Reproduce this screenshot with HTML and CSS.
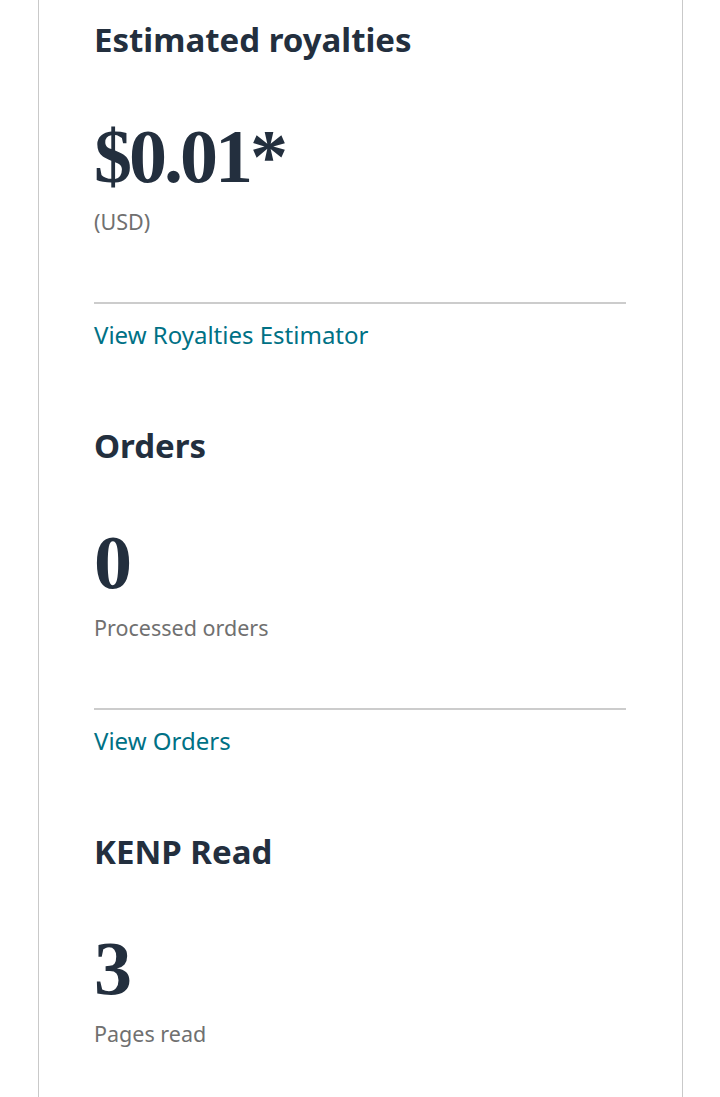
FILE: index.html
```html
<!DOCTYPE html>
<html lang="en">
<head>
  <meta charset="UTF-8">
  <meta name="viewport" content="width=device-width, initial-scale=1.0">
  <title>Sales dashboard</title>
  <link rel="stylesheet" href="styles.css">
</head>
<body>
  <div class="card">
    <div class="metric">
      <h2 class="metric-title">Estimated royalties</h2>
      <div class="metric-value">$0.01*</div>
      <p class="metric-sub">(USD)</p>
      <hr class="metric-rule">
      <a class="metric-link" href="#">View Royalties Estimator</a>
    </div>

    <div class="metric">
      <h2 class="metric-title">Orders</h2>
      <div class="metric-value">0</div>
      <p class="metric-sub">Processed orders</p>
      <hr class="metric-rule">
      <a class="metric-link" href="#">View Orders</a>
    </div>

    <div class="metric">
      <h2 class="metric-title">KENP Read</h2>
      <div class="metric-value">3</div>
      <p class="metric-sub">Pages read</p>
    </div>
  </div>
</body>
</html>
```

FILE: styles.css
```css
*{
  margin: 0;
  padding: 0;
  box-sizing: border-box;
}

body{
  background: #fff;
  font-family: "Noto Sans", "Open Sans", sans-serif;
  color: #232f3e;
}

.card{
  width: 645px;
  min-height: 1097px;
  margin-left: 38px;
  padding: 20px 56px 0 55px;
  border-left: 1px solid #c9c9c9;
  border-right: 1px solid #c9c9c9;
}

.metric{
  display: flex;
  flex-direction: column;
  align-items: flex-start;
  margin-bottom: 76px;
}

.metric-title{
  font-size: 33px;
  line-height: 40px;
  font-weight: 700;
  color: #232f3e;
}

.metric-value{
  margin-top: 58px;
  font-family: "Liberation Serif", "DejaVu Serif", serif;
  font-size: 76px;
  line-height: 76px;
  font-weight: 700;
  letter-spacing: -3px;
  color: #232f3e;
}

.metric-sub{
  margin-top: 13px;
  font-size: 21.5px;
  line-height: 30px;
  color: #707070;
}

.metric-rule{
  align-self: stretch;
  margin-top: 65px;
  border: 0;
  height: 2px;
  background: #cccccc;
}

.metric-link{
  margin-top: 16px;
  font-size: 24px;
  line-height: 30px;
  color: #007185;
  text-decoration: none;
}
```
